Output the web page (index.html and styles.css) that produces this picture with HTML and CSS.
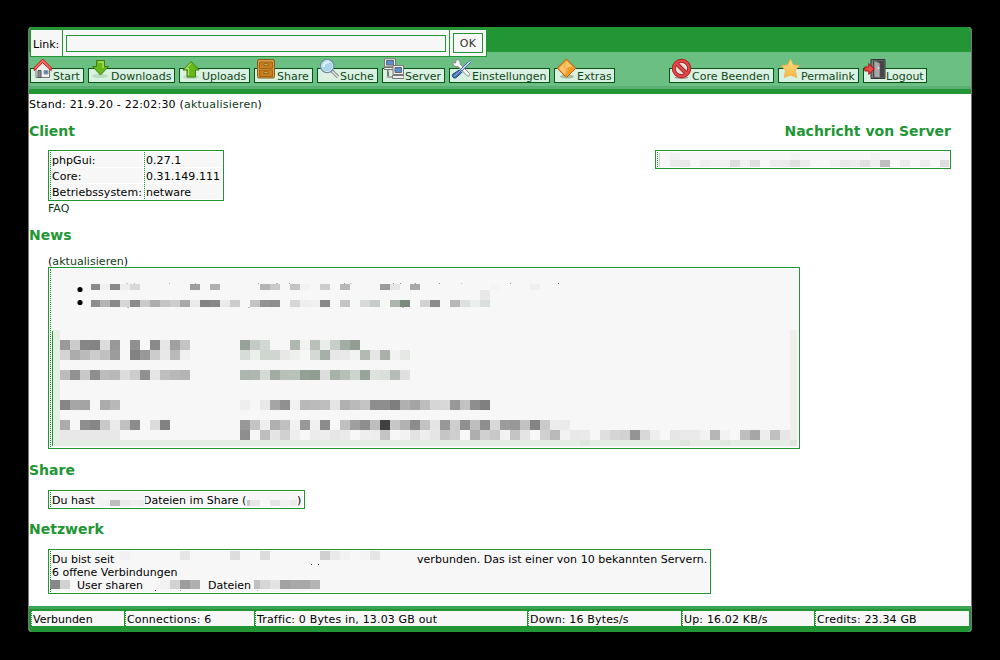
FILE: index.html
```html
<!DOCTYPE html>
<html lang="de">
<head>
<meta charset="utf-8">
<title>phpGui</title>
<link rel="stylesheet" href="styles.css">
</head>
<body>
<div class="window">
  <header class="header">
    <form class="linkbar">
      <label class="link-label">Link:</label>
      <div class="link-field"><div class="link-input"></div></div>
      <div class="link-ok"><div class="ok">OK</div></div>
    </form>
    <nav class="nav">
      <a class="btn w-start"><svg class="icon" viewBox="0 0 20 21"><path d="M4 10v9.500h13.500V10l-6.700-6z" fill="#f1f1f1" stroke="#777"/><path d="M6 12.500h3v7H6z" fill="#8c8c98" stroke="#555"/><path d="M12 12.500h4v3.500h-4z" fill="#4c86c4" stroke="#999"/><path d="M10.700 1L2.200 9.500v3.200l8.500-8 8.500 8V9.500z" fill="#f56a62" stroke="#c91c1c"/></svg><span>Start</span></a>
      <a class="btn w-down"><svg class="icon" viewBox="0 0 20 21"><ellipse cx="10" cy="18" rx="8" ry="2" fill="#b9dcc1"/><path d="M6.500 2.500h8v6h4l-8 8.500-8-8.500h4z" fill="#66b81b" stroke="#407c10"/><path d="M8 4h5v6" fill="none" stroke="#a9df5e" stroke-width="1.500"/></svg><span>Downloads</span></a>
      <a class="btn w-up"><svg class="icon" viewBox="0 0 20 21"><ellipse cx="10" cy="19" rx="8" ry="2" fill="#b9dcc1"/><path d="M6 19h8.500v-7h3.700L10.200 3.500 2 12h4z" fill="#66b81b" stroke="#407c10"/><path d="M7.500 17.500v-7h-2.500l5.200-5.300" fill="none" stroke="#a9df5e" stroke-width="1.200"/></svg><span>Uploads</span></a>
      <a class="btn w-share"><svg class="icon" viewBox="0 0 20 21"><rect x="1.500" y="1.500" width="17" height="18.500" rx="1.500" fill="#d89f50" stroke="#8b5a14"/><path d="M3.500 4h13v6.500h-13zM3.500 12h13v6.500h-13z" fill="#c57e18" stroke="#a56515"/><path d="M8 6h4v1.500H8zM8 14h4v1.500H8z" fill="#f4d890" stroke="#6b410b" stroke-width=".6"/></svg><span>Share</span></a>
      <a class="btn w-suche"><svg class="icon" viewBox="0 0 20 21"><ellipse cx="9" cy="17.500" rx="7" ry="2.300" fill="#e2efe5"/><path d="M13 13l6 6" stroke="#8b8b8b" stroke-width="3.400"/><path d="M13 13l6 6" stroke="#e6e6e6" stroke-width="1.500"/><circle cx="8.200" cy="8" r="6.400" fill="#a6d5ec" stroke="#6f8e9b" stroke-width="1.800"/><circle cx="8.200" cy="8" r="5.600" fill="none" stroke="#d8edf6"/><path d="M4.500 9c0-3 2-5 6-5" fill="none" stroke="#e6f7ff" stroke-width="2"/></svg><span>Suche</span></a>
      <a class="btn w-server"><svg class="icon" viewBox="0 0 20 21"><path d="M4 10v9h7" fill="none" stroke="#777" stroke-width="2"/><path d="M1 19h9M4 13h8" stroke="#ddd"/><path d="M.5.8h11v8H.5zM0 9.500h12v2H0z" fill="#eee" stroke="#777"/><path d="M2.500 2.500h7V7h-7z" fill="#5590d2" stroke="#666"/><path d="M9 7.500h10.500v9H9zM8.500 17.500h11.500v3H8.500z" fill="#eee" stroke="#777"/><path d="M11 9.500h6.500v5H11z" fill="#5590d2" stroke="#666"/></svg><span>Server</span></a>
      <a class="btn w-einst"><svg class="icon" viewBox="0 0 20 21"><path d="M1.500 4.500l3 .5.800-3.500c3 0 4.500 2 3.800 4.500l9.400 9.500c1 1.500-.8 3.300-2.400 2.300L7 8.500c-3 .7-5-1-5.500-4z" fill="#f5f5f5" stroke="#888"/><path d="M19.500 2.500l1 1L11 13 9.500 11.500l8-8z" fill="#b8d4f0" stroke="#5275a1"/><path d="M8.300 12l2.500 2.500-5.500 5c-2 1.500-5-.5-3.600-3.200z" fill="#4170b5" stroke="#23487c"/><path d="M3.500 18l5.500-5" stroke="#a3c1e8"/></svg><span>Einstellungen</span></a>
      <a class="btn w-extras"><svg class="icon" viewBox="0 0 20 21"><ellipse cx="11" cy="18.500" rx="7" ry="2" fill="#a7bda5"/><path d="M10.500 1l9.300 9.300-9.300 9.200-9.300-9.200z" fill="#f39a27" stroke="#b95f13"/><path d="M10.500 2.700l7 7-5-1-3 4-1 4-5.500-6.500z" fill="#fbc56f"/><path d="M10 3.500l-2 5 3 3-2 5" fill="none" stroke="#f7af4b" stroke-width="1.500"/></svg><span>Extras</span></a>
      <span class="nav-gap"></span>
      <a class="btn w-core"><svg class="icon" viewBox="0 0 20 21"><ellipse cx="10.500" cy="19.500" rx="7" ry="1.500" fill="#ad9090"/><circle cx="10.500" cy="10.500" r="7.700" fill="#dfe3e0" stroke="#a21515" stroke-width="4"/><path d="M5 5l11 11" stroke="#a21515" stroke-width="4"/><circle cx="10.500" cy="10.500" r="7.700" fill="none" stroke="#e34848" stroke-width="2.500"/><path d="M4.700 4.700l11.600 11.600" stroke="#e34848" stroke-width="2.500"/></svg><span>Core Beenden</span></a>
      <a class="btn w-perma"><svg class="icon" viewBox="0 0 20 21"><defs><linearGradient id="g" x2="0" y2="1"><stop stop-color="#ffdf87"/><stop offset="1" stop-color="#fbb443"/></linearGradient></defs><path d="M10.500 1l2.700 5.800 6.300.8-4.300 4.600 1.500 7.300-6.200-2.500-6.200 2.500 1.200-7-4.200-4.900 6.500-.8z" fill="url(#g)" stroke="#efab42" stroke-width=".7"/></svg><span>Permalink</span></a>
      <a class="btn w-logout"><svg class="icon icon-door" viewBox="0 0 22 21"><path d="M7 1.500h14v19H7z" fill="#808080" stroke="#333"/><path d="M9 2.500h11v17H9z" fill="#454545"/><path d="M10 2.500l6 2.500v15l-6-1z" fill="#a9a9a9" stroke="#555" stroke-width=".7"/><circle cx="14.500" cy="10" r=".9" fill="#eee"/><path d="M.8 9h4V5.500l5.500 5.500-5.500 5.500V13h-4z" fill="#ec4a43" stroke="#a51414"/></svg><span>Logout</span></a>
    </nav>
  </header>
  <main class="content">
    <p class="stand">Stand: 21.9.20 - 22:02:30 (<a>aktualisieren</a>)</p>
    <div class="top">
      <section>
        <h2>Client</h2>
        <div class="box client">
          <div class="cell">phpGui:</div><div class="cell">0.27.1</div>
          <div class="cell">Core:</div><div class="cell">0.31.149.111</div>
          <div class="cell">Betriebssystem:</div><div class="cell">netware</div>
        </div>
        <a class="faq">FAQ</a>
      </section>
      <section class="message">
        <h2>Nachricht von Server</h2>
        <div class="box message-box"><svg class="mosaic" data-part="message" viewBox="655 150 296 19" width="296" height="19"></svg><div class="cell"></div></div>
      </section>
    </div>
    <h2 class="h-news">News</h2>
    <p class="refresh">(<a>aktualisieren</a>)</p>
    <div class="box news"><svg class="mosaic" data-part="news" viewBox="48 267 752 182" width="752" height="182"></svg><div class="cell"></div></div>
    <h2 class="h-share">Share</h2>
    <div class="box share"><svg class="mosaic" data-part="share" viewBox="48 490 257 19" width="257" height="19"></svg><div class="cell line"><span class="s1">Du hast</span><span class="s2">Dateien im Share (</span><span>)</span></div></div>
    <h2 class="h-net">Netzwerk</h2>
    <div class="box net"><svg class="mosaic" data-part="net" viewBox="48 549 663 45" width="663" height="45"></svg><div class="cell">
      <div class="line"><span class="n1">Du bist seit</span><span class="n1b">verbunden. Das ist einer von 10 bekannten Servern.</span></div>
      <div class="line">6 offene Verbindungen</div>
      <div class="line"><span class="n3">User sharen</span><span>Dateien</span></div>
    </div></div>
  </main>
  <footer class="footer">
    <div class="status">
      <div class="cell c1">Verbunden</div><div class="cell c2">Connections: 6</div><div class="cell c3">Traffic: 0 Bytes in, 13.03 GB out</div><div class="cell c4">Down: 16 Bytes/s</div><div class="cell c5">Up: 16.02 KB/s</div><div class="cell c6">Credits: 23.34 GB</div>
    </div>
  </footer>
</div>
<script src="mosaic.js"></script>
</body>
</html>
```
FILE: styles.css
```css
* { box-sizing: border-box; }
body { margin: 0; height: 660px; overflow: hidden; background: #000; color: #000; font: 11px/13px "DejaVu Sans", Verdana, sans-serif; padding: 27px 28px 0 28px; }
p, h2 { margin: 0; }
a { color: #103c1b; text-decoration: none; }
span, .cell, p { white-space: pre; }
.window { width: 944px; height: 605px; border-radius: 4px; overflow: hidden; background: #fff; border-left: 1px solid #777; border-right: 1px solid #777; }
.header { height: 67px; margin: 0 -1px; background: linear-gradient(#229634 25px, #6bbf83 25px 59px, #5caf72 59px 62px, #229634 62px); padding: 3px 0 0 2px; }
.linkbar { display: flex; width: 457px; height: 27px; border: 1px solid #229634; border-top: 0; background: #f7f7f7; }
.link-label { width: 32px; padding: 8px 0 0 2px; border-right: 1px solid #229634; }
.link-field { width: 387px; padding: 5px 3px; border-right: 1px solid #229634; }
.link-input { width: 380px; height: 17px; border: 1px solid #229634; }
.link-ok { padding: 3px; }
.ok { width: 30px; height: 20px; border: 1px solid #229634; line-height: 19px; text-align: center; color: #333; letter-spacing: .3px; }
.nav { display: flex; gap: 4px; margin-top: 11px; }
.btn { display: flex; align-items: flex-end; gap: 1px; height: 15px; border: 1px solid #0a5318; background: #d9f1e0; color: #154722; padding-left: 1px; }
.btn span { line-height: 13px; height: 12px; }
.icon { display: block; width: 20px; height: 21px; margin-bottom: 3px; flex: none; }
.icon-door { width: 22px; margin-left: -1px; margin-right: -1px; }
.w-start { width: 54px; } .w-down { width: 87px; } .w-up { width: 71px; } .w-share { width: 59px; }
.w-suche { width: 61px; } .w-server { width: 63px; } .w-einst { width: 101px; } .w-extras { width: 61px; }
.nav-gap { width: 46px; }
.w-core { width: 105px; } .w-perma { width: 81px; letter-spacing: -.05px; } .w-logout { width: 64px; }
.content { height: 512px; padding: 4px 20px 0 0; }
.stand { letter-spacing: .21px; }
.top { display: flex; justify-content: space-between; height: 111px; margin-top: 12px; }
h2 { font-size: 14px; line-height: 16px; font-weight: bold; color: #229634; }
.box { position: relative; border: 1px solid #229634; padding: 1px; background: #fff; margin-left: 19px; }
.cell { border-left: 1px dotted #119a24; background: #f7f7f7; padding-left: 1px; }
.mosaic { position: absolute; left: -1px; top: -1px; }
.client { display: grid; grid-template-columns: 93px 78px; grid-auto-rows: 15px; gap: 1px; width: 176px; height: 51px; margin-top: 11px; line-height: 18px; letter-spacing: .05px; }
.faq { display: block; margin: 1px 0 0 19px; }
.message h2 { text-align: right; }
.message-box { width: 296px; height: 19px; margin: 11px 0 0; }
.message-box .cell, .news .cell { height: 100%; }
.h-news { margin-top: -7px; }
.refresh { margin: 12px 0 0 19px; letter-spacing: .05px; }
.news { width: 752px; height: 182px; margin-top: -1px; }
.h-share { margin-top: 13px; }
.share { width: 257px; height: 19px; margin-top: 12px; }
.share .cell { height: 15px; line-height: 18px; }
.line { display: flex; }
.s1 { width: 91px; } .s2 { width: 154px; }
.h-net { margin-top: 12px; }
.net { width: 663px; height: 45px; margin-top: 12px; }
.net .cell { height: 41px; padding-top: 2px; white-space: normal; }
.n1 { width: 365px; } .n1b { letter-spacing: .03px; } .n3 { width: 156px; padding-left: 25px; }
.footer { height: 26px; margin: 0 -1px; padding: 5px 3px; background: linear-gradient(#3aa655 3px, #229634 3px); }
.status { display: flex; height: 15px; gap: 1px; letter-spacing: .16px; }
.status .cell { line-height: 18px; height: 15px; }
.c1 { width: 93px; letter-spacing: 0; } .c2 { width: 129px; } .c3 { width: 272px; } .c4 { width: 153px; } .c5 { width: 132px; } .c6 { flex: 1; }
```
FILE: mosaic.js
```js
// Each row: y, height, then "x:shade" entries; cells are 10px wide unless "x/width:shade".
const parts = {
  message: [
    [153, 7, '659/1:c8d8cb 670:f1 790:f4 870:f2'],
    [160, 7, '659/1:c8d8cb 670:eb 680:e8 700:ee 710:f1 720:f1 730:dd 740:f0 750:df 770:ec 780:eb 790:e0e0dd 800:ec 830:f1 840:e9 850:ec 860:df 870:ee 880:be 900:eb 920:ed 940/9:dc']
  ],
  news: [
    [283, 1, '126/2:cc 134/1:bb 169/1:aa 195/1:aa 258/1:aa 276/2:bb 289/1:99 344/1:88 350/2:cc 393/1:88 400/1:99 415/1:99 439/1:99 461/1:bb 510/1:99 558/1:66'],
    [307, 1, '127/2:bb 248/2:bb 402/2:bb'],
    [284, 6, '91/9:8a 100:f0 110:8a 120:ee 130:d8 190:9e 210:b0 260:b4 270:c8 290:c4 300:f3 320:cc 340:b8 380:9b 390:e6 410:a8 490:f4 530:ef'],
    [290, 10, '480:e8'],
    [300, 7, '91/9:8e 100:b4 110:8a 120:d6 130:8b 140:ca 150:ad 160:c4 170:cd 180:a8 190:ea 200:82 210:88 220:ea 230:cc 250:c4 260:92 270:8e 290:d6 300:ee 310:f0 320:88 340:c4 360:d6dbd7 370:c8ccc9 390:adb5ae 400:798c7c 420:d2 430:8c 450:b8 460:dce1dd 470:ebeeec 480:dadfdb'],
    [331, 115, '52/1:229634'],
    [330, 116, '53/7:e8eee8 790/7:edf0ed'],
    [440, 6, '53/744:e5ebe5 580:e0e6e0 680:e0e5e0 720:e0e6e0 790/7:dfe4df'],
    [340, 10, '60:9a 70:cc 80:86 90:84 100:dc 110:98 130:90 150:8a 160:e6 170:a0 180:c4 240:96a297 250:c4cac5 260:d2d8d3 290:afb8b0 300:f2 310:b8c0b9 320:ebedeb 330:c8ceca 340:a2aea3 350:929e93'],
    [350, 10, '60:d4 70:ac 80:ba 90:cc 100:c0 110:9c 130:82 140:98 150:cc 160:e8 170:ba 180:f0 240:d6dcd7 250:ebeeeb 260:cfd6d0 270:d0d5d1 280:e8 290:edf0ed 310:d3d9d4 320:a6b0a8 330:e6 340:e8 350:f2 360:b2bab3 370:e6 380:a9b0aa 390:f2 400:e5e8e5'],
    [370, 10, '60:bc 70:92 80:c8 90:8e 100:bc 110:b8 120:dc 130:cc 140:90 150:e5 160:be 170:b8 180:b4 240:acb6ae 250:b2b6b2 260:d5dad6 270:a1aca3 280:b8c0b9 290:b9c2ba 300:93a095 310:909d92 320:dd 330:a6b1a8 340:b7c0b8 350:cdd3ce 360:98a59a 370:dfe3e0 380:dadfdb 390:b6bbb7 400:e0'],
    [400, 10, '60:86 70:a6 80:a4 100:ac 110:b8 240:ee 260:e8 270:a5 280:90 290:f1 300:b8 310:bb 320:be 330:e5 340:b0 350:ba 360:c4 370:8e 380:8e 390:7e 400:b0 410:a4 420:bd 430:d6 440:d8 450:98 460:c2 470:8e 480:80'],
    [420, 10, '60:ac 80:8e 90:86 100:c8 110:ea 120:c0 130:8c 150:dc 160:82 240:98 250:c4 260:ee 270:b0 280:c0 290:f2 300:98 310:f0 320:8c 340:c0 350:a0 360:8e 370:be 380:40 390:c6 400:b2 410:8c 420:c2 430:e4 440:98 450:ce 460:90 470:be 480:8e 490:d8 500:9c 510:98 520:c2 530:84 540:ca 550:ec 560:ea'],
    [430, 10, '60/60:e8 240:8e 260:be 270:e4 280:d0 290:ee 310:ec 320:ed 330:e6 340:ea 360:ee 370:ed 380:c4 400:f2 410:e3 420:ee 430:e5 440:c5 450:ce 470:ae 480:d0 490:c8 500:f2 510:c4 520:e4 540:d0 550:ba 560:f2 570:e8 580:ea 600:df 610:d5 620:d2 630:94 640:d8 650:ee 670:e6 680:ea 690:ea 700:f2 710:b6 720:f2 740:be 750:a6 760:ed 770:c0 780:e6']
  ],
  share: [
    [493, 13, '98/47:f5'],
    [500, 6, '100:f1 110:bc 120:ea 130:ee 140/4:ea 247/3:c8 250:e6 270:e4 280:f1 290/7:eb']
  ],
  net: [
    [551, 9, '120:f1 180:e5 230:dd 260:dc 320:d0 330:e9 340:f2 360:f4 370:e5'],
    [564, 1, '311/1:22 318/1:22'],
    [580, 9, '50:88 60:d2 160:f1 170:d2 180:9c 190:b0 254/6:c0 260:d6 270:e3 280:a2 290:a8 300:a8 310:b4'],
    [590, 1, '155/1:22 180/1:99 257/1:bb']
  ]
};
const NS = 'http://www.w3.org/2000/svg';
function rect(svg, x, y, w, h, fill) {
  const r = document.createElementNS(NS, 'rect');
  for (const [k, v] of Object.entries({ x, y, width: w, height: h, fill })) r.setAttribute(k, v);
  svg.append(r);
}
for (const svg of document.querySelectorAll('.mosaic')) {
  for (const [y, h, cells] of parts[svg.dataset.part]) {
    for (const cell of cells.split(' ')) {
      const [pos, shade] = cell.split(':');
      const [x, w = 10] = pos.split('/').map(Number);
      rect(svg, x, y, w, h, '#' + (shade.length === 2 ? shade.repeat(3) : shade));
    }
  }
  if (svg.dataset.part === 'news') {
    for (const y of [289.5, 302.5]) {
      const c = document.createElementNS(NS, 'circle');
      for (const [k, v] of Object.entries({ cx: 80, cy: y, r: 2.6 })) c.setAttribute(k, v);
      svg.append(c);
    }
  }
}
```
